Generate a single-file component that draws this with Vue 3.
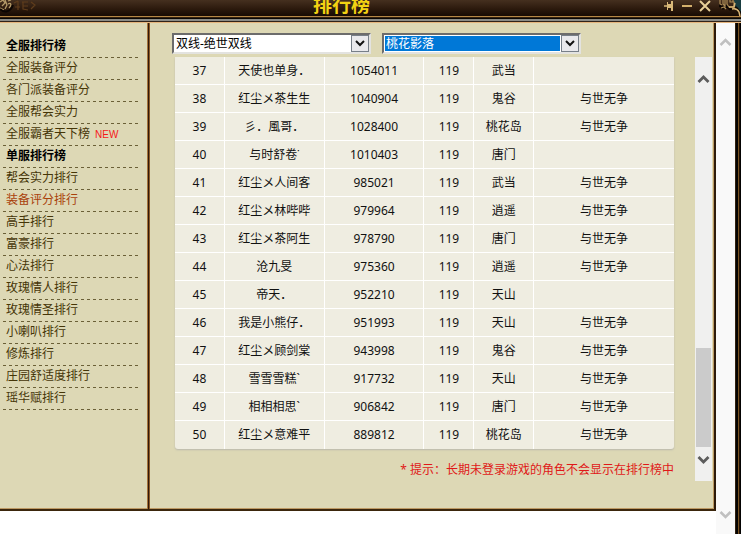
<script setup>
import { ref } from 'vue'

const groups = [
  {
    title: '全服排行榜',
    items: [
      { name: '全服装备评分' },
      { name: '各门派装备评分' },
      { name: '全服帮会实力' },
      { name: '全服霸者天下榜', fresh: true },
    ],
  },
  {
    title: '单服排行榜',
    items: [
      { name: '帮会实力排行' },
      { name: '装备评分排行' },
      { name: '高手排行' },
      { name: '富豪排行' },
      { name: '心法排行' },
      { name: '玫瑰情人排行' },
      { name: '玫瑰情圣排行' },
      { name: '小喇叭排行' },
      { name: '修炼排行' },
      { name: '庄园舒适度排行' },
      { name: '瑶华赋排行' },
    ],
  },
]
const active = ref('装备评分排行')
const zone = ref('双线-绝世双线')
const server = ref('桃花影落')

const rows = [
  [37, '天使也单身．', 1054011, 119, '武当', ''],
  [38, '红尘メ茶生生', 1040904, 119, '鬼谷', '与世无争'],
  [39, '彡．風哥．', 1028400, 119, '桃花岛', '与世无争'],
  [40, '与时舒卷˙', 1010403, 119, '唐门', ''],
  [41, '红尘メ人间客', 985021, 119, '武当', '与世无争'],
  [42, '红尘メ林哔哔', 979964, 119, '逍遥', '与世无争'],
  [43, '红尘メ茶阿生', 978790, 119, '唐门', '与世无争'],
  [44, '沧九旻', 975360, 119, '逍遥', '与世无争'],
  [45, '帝天．', 952210, 119, '天山', ''],
  [46, '我是小熊仔．', 951993, 119, '天山', '与世无争'],
  [47, '红尘メ顾剑棠', 943998, 119, '鬼谷', '与世无争'],
  [48, '雪雪雪糕`', 917732, 119, '天山', '与世无争'],
  [49, '相相相思`', 906842, 119, '唐门', '与世无争'],
  [50, '红尘メ意难平', 889812, 119, '桃花岛', '与世无争'],
]
</script>

<template>
  <div class="window">
    <header class="titlebar">
      <svg class="ornament" width="40" height="16" viewBox="0 0 40 16" aria-hidden="true">
        <path d="M0 2L3 0L5 3L2 6M5 0L7 5L5 9M8 1L11 0M8 4C11 2 12 5 9 8M0 8L4 10" fill="none" stroke="#b59b68" stroke-width="1.3" />
        <path d="M0 9C5 14 11 11 13 5" fill="none" stroke="#0c0603" stroke-width="2" />
        <path d="M14 3L18 1M15 7H20M18 1V10M22 2H28M23 6H28M23 2V9L28 10M31 2L35 5L31 9" fill="none" stroke="#5f3d1c" stroke-width="1.2" />
      </svg>
      <h1>排行榜</h1>
      <div class="controls">
        <button type="button" aria-label="固定">
          <svg width="12" height="12" viewBox="0 0 12 12"><path d="M1 6H4" stroke="#d9b878" stroke-width="1.5" /><path d="M4 2H5V4H8V1H10V11H8V8H5V10H4Z" fill="#d9b878" /></svg>
        </button>
        <button type="button" aria-label="最小化">
          <svg width="12" height="12" viewBox="0 0 12 12"><path d="M1 6H11" stroke="#d3b06c" stroke-width="2" /></svg>
        </button>
        <button type="button" aria-label="关闭">
          <svg width="12" height="12" viewBox="0 0 12 12"><path d="M1 1L11 11M11 1L1 11" stroke="#e8cf98" stroke-width="2" /></svg>
        </button>
      </div>
      <svg class="corner" width="22" height="16" viewBox="0 0 22 16" aria-hidden="true">
        <path d="M15 0H22V13L19 8L15 6Z" fill="#183c40" />
        <path d="M0 5L4 8L8 6L11 9L17 8L21 13" fill="none" stroke="#0c0603" stroke-width="3" />
        <path d="M1 0V4L3 5M4 0V4L6 6V0M8 0V4L10 7H15V2H11V0M14 0V2M2 8L5 7L7 9" fill="none" stroke="#a98a55" stroke-width="1.2" />
        <path d="M10 7H15L16 3M13 9C17 8 19 10 20 12L21 16" fill="none" stroke="#dcb878" stroke-width="1.5" />
      </svg>
    </header>

    <main class="body">
      <div class="panel">
        <nav class="sidebar">
          <template v-for="g in groups" :key="g.title">
            <h2>{{ g.title }}</h2>
            <ul>
              <li v-for="i in g.items" :key="i.name">
                <a href="#" :class="{ active: active === i.name }" @click.prevent="active = i.name">{{ i.name }}</a>
                <span v-if="i.fresh" class="new">NEW</span>
              </li>
            </ul>
          </template>
        </nav>

        <section class="content">
          <form class="filters" @submit.prevent>
            <div class="combo">
              <select v-model="zone" aria-label="大区">
                <option>双线-绝世双线</option>
              </select>
              <svg class="drop" width="18" height="17" viewBox="0 0 18 17" aria-hidden="true"><rect x=".5" y=".5" width="17" height="16" fill="#e9e9ec" stroke="#777f88" /><path d="M5 6L9 10L13 6" fill="none" stroke="#111" stroke-width="2" /></svg>
            </div>
            <div class="combo focused">
              <select v-model="server" aria-label="服务器">
                <option>桃花影落</option>
              </select>
              <svg class="drop" width="18" height="17" viewBox="0 0 18 17" aria-hidden="true"><rect x=".5" y=".5" width="17" height="16" fill="#e9e9ec" stroke="#777f88" /><path d="M5 6L9 10L13 6" fill="none" stroke="#111" stroke-width="2" /></svg>
            </div>
          </form>

          <div class="list">
            <div class="results">
              <table aria-label="装备评分排行">
                <colgroup>
                  <col class="rank" /><col class="name" /><col class="score" /><col class="level" /><col class="school" /><col class="guild" />
                </colgroup>
                <tbody>
                  <tr v-for="r in rows" :key="r[0]">
                    <td v-for="(c, k) in r" :key="k">{{ c }}</td>
                  </tr>
                </tbody>
              </table>
              <p class="hint">* 提示：长期未登录游戏的角色不会显示在排行榜中</p>
            </div>
            <div class="scroll inner" aria-hidden="true">
              <svg width="13" height="10" viewBox="0 0 13 10"><path d="M1.5 8L6.5 3L11.5 8" fill="none" stroke="#5c5c5c" stroke-width="2.8" /></svg>
              <div class="thumb"></div>
              <svg width="13" height="10" viewBox="0 0 13 10"><path d="M1.5 2L6.5 7L11.5 2" fill="none" stroke="#5c5c5c" stroke-width="2.8" /></svg>
            </div>
          </div>
        </section>
      </div>

      <div class="scroll outer" aria-hidden="true">
        <svg width="13" height="10" viewBox="0 0 13 10"><path d="M1.5 8L6.5 3L11.5 8" fill="none" stroke="#c0c0c0" stroke-width="2.5" /></svg>
        <svg width="13" height="10" viewBox="0 0 13 10"><path d="M1.5 2L6.5 7L11.5 2" fill="none" stroke="#c0c0c0" stroke-width="2.5" /></svg>
      </div>
      <div class="frame"></div>
    </main>
  </div>
</template>

<style>
body {
  margin: 0;
  background: #fff;
}
</style>

<style scoped>
.window {
  display: flex;
  flex-direction: column;
  min-height: 100vh;
  font-family: "Noto Sans", "Noto Sans CJK SC", sans-serif;
  font-size: 12px;
  color: #111;
}
.titlebar {
  display: flex;
  height: 16px;
  background: linear-gradient(#45301f, #2c1a0d 55%, #170b04);
}
h1 {
  flex: 1;
  margin: 0;
  padding-right: 20px;
  font-size: 19px;
  line-height: 10px;
  text-align: center;
  color: #f3d313;
}
.controls {
  display: flex;
  gap: 6px;
  height: 12px;
}
.controls button {
  width: 12px;
  height: 12px;
  padding: 0;
  border: 0;
  background: none;
}
svg {
  display: block;
  flex: none;
}
.corner {
  margin-left: 8px;
}
.body {
  display: flex;
  flex: 1;
  align-items: flex-start;
  border-top: 7px solid transparent;
  background: linear-gradient(#b48745 0 1px, #32200f 1px 2px, #080604 2px 3px, #8b8c87 3px 5px, #30231a 5px 6px, #e5b57d 6px 7px) border-box 0 0 / 100% 7px no-repeat;
}
.panel {
  display: flex;
  flex: 1;
  min-width: 0;
  background: #ddd8b5;
  border-right: 2px solid #2d1b0a;
  border-bottom: 2px solid #3b260c;
  box-shadow: inset -1px -1px #bd9962;
}
.sidebar {
  box-sizing: border-box;
  width: 150px;
  padding: 13px 11px 0 3px;
  background: linear-gradient(90deg, #a5733a 0 1px, #32190a 1px 2px, #8a5a28 2px 3px) right / 3px 100% no-repeat;
}
h2,
li {
  box-sizing: border-box;
  height: 22px;
  margin: 0;
  padding-left: 3px;
  background: repeating-linear-gradient(90deg, #6b6037 0 3px, transparent 3px 6px) bottom / 100% 1px no-repeat;
  font-size: 12px;
  line-height: 20px;
}
h2 {
  color: #000;
}
ul {
  margin: 0;
  padding: 0;
  list-style: none;
}
a {
  color: #453507;
  text-decoration: none;
}
a.active {
  color: #a9410b;
}
.new {
  margin-left: 5px;
  font-family: "Liberation Sans", sans-serif;
  font-size: 10px;
  color: #f51919;
}
.content {
  flex: 1;
  min-width: 0;
  padding: 10px 2px 28px 22px;
}
.filters {
  display: flex;
  gap: 11px;
  padding-bottom: 3px;
}
.combo {
  position: relative;
  box-sizing: border-box;
  width: 199px;
  height: 21px;
  border: 2px solid;
  border-color: #6c6c6c #e3e3e0 #e3e3e0 #6c6c6c;
}
.combo select {
  display: block;
  box-sizing: border-box;
  width: 100%;
  height: 17px;
  padding: 0 1px;
  border: 1px solid #fff;
  border-right-width: 19px;
  border-radius: 0;
  outline: 0;
  appearance: none;
  background: #fff;
  color: #000;
  font: inherit;
  line-height: 15px;
}
.combo.focused select {
  background: #0078d7;
  color: #fff;
}
.drop {
  position: absolute;
  top: 0;
  right: 0;
  pointer-events: none;
}
.list {
  display: flex;
  justify-content: space-between;
  gap: 21px;
  padding-left: 3px;
}
.results {
  flex: 1;
  min-width: 0;
}
table {
  width: 100%;
  table-layout: fixed;
  border-spacing: 0;
  background: #efede1;
  border-radius: 0 0 3px 3px;
  box-shadow: 0 1px 2px #b9b7ad;
}
.rank,
.level {
  width: 10%;
}
.name,
.score {
  width: 20%;
}
.school {
  width: 12%;
}
.guild {
  width: 28%;
}
td {
  box-sizing: border-box;
  height: 28px;
  padding: 0;
  border-right: 1px solid #fff;
  border-bottom: 1px solid #fff;
  line-height: 18px;
  text-align: center;
  white-space: nowrap;
}
td:last-child {
  border-right: 0;
}
tr:last-child td {
  border-bottom: 0;
}
.hint {
  margin: 11px 0 0;
  padding-bottom: 1px;
  line-height: 20px;
  text-align: right;
  color: #e01818;
}
.scroll {
  display: flex;
  flex: none;
  flex-direction: column;
  align-items: center;
  box-sizing: border-box;
  width: 17px;
}
.inner {
  padding: 17px 0 16px;
  background: #f0f0ef;
}
.thumb {
  width: 15px;
  height: 99px;
  margin: auto 0 8px;
  background: #cbcbcb;
}
.outer {
  align-self: stretch;
  justify-content: space-between;
  width: 19px;
  padding: 14px 0;
  background: #f9f9f9;
}
.frame {
  align-self: stretch;
  width: 6px;
  background: linear-gradient(90deg, #30200f 0 1px, #050302 1px 3px, #795322 3px 4px, #221307 4px 5px, #050302 5px);
}
</style>
